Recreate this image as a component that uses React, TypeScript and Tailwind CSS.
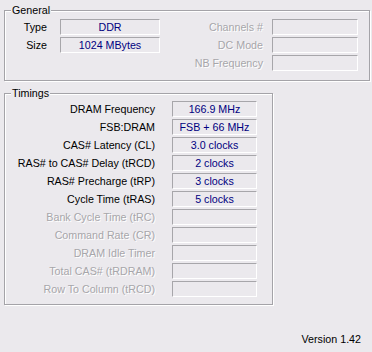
import React from "react";

type Row = { label: string; value?: string };

const general: Row[] = [
  { label: "Type", value: "DDR" },
  { label: "Size", value: "1024 MBytes" },
];

const generalRight: Row[] = [
  { label: "Channels #" },
  { label: "DC Mode" },
  { label: "NB Frequency" },
];

const timings: Row[] = [
  { label: "DRAM Frequency", value: "166.9 MHz" },
  { label: "FSB:DRAM", value: "FSB + 66 MHz" },
  { label: "CAS# Latency (CL)", value: "3.0 clocks" },
  { label: "RAS# to CAS# Delay (tRCD)", value: "2 clocks" },
  { label: "RAS# Precharge (tRP)", value: "3 clocks" },
  { label: "Cycle Time (tRAS)", value: "5 clocks" },
  { label: "Bank Cycle Time (tRC)" },
  { label: "Command Rate (CR)" },
  { label: "DRAM Idle Timer" },
  { label: "Total CAS# (tRDRAM)" },
  { label: "Row To Column (tRCD)" },
];

const disabled = "text-[#a7a6aa] [text-shadow:1px_1px_0_#ffffff]";

function Box({ value, className }: { value?: string; className: string }) {
  return (
    <div
      className={`h-[16px] border border-t-[#a7a6aa] border-l-[#a7a6aa] border-b-white border-r-white text-center leading-[15px] text-[#000080] ${className}`}
    >
      {value}
    </div>
  );
}

function Group({ title, className, children }: { title: string; className: string; children: React.ReactNode }) {
  return (
    <div
      className={`relative ml-[4px] border border-[#a4a3a8] shadow-[inset_1px_1px_0_#ffffff,1px_1px_0_#ffffff] ${className}`}
    >
      <span className="absolute -top-[8px] left-[6px] bg-[#ebe9ed] px-[1px] leading-[14px]">{title}</span>
      {children}
    </div>
  );
}

export default function App() {
  return (
    <div
      className="w-[372px] h-[352px] overflow-hidden bg-[#ebe9ed] text-[10.7px] text-black"
      style={{ fontFamily: '"Liberation Sans", Arial, sans-serif' }}
    >
      <div className="h-[10px]" />

      {/* General */}
      <Group title="General" className="w-[366px] h-[71px] pt-[8px] flex">
        <div className="flex flex-col gap-[2px]">
          {general.map((r) => (
            <div key={r.label} className="flex items-center h-[16px]">
              <div className="w-[42px] text-right leading-[17px]">{r.label}</div>
              <Box value={r.value} className="ml-[13px] w-[100px]" />
            </div>
          ))}
        </div>
        <div className="ml-[11px] flex flex-col gap-[2px]">
          {generalRight.map((r) => (
            <div key={r.label} className="flex items-center h-[16px]">
              <div className={`w-[92px] text-right leading-[17px] ${disabled}`}>{r.label}</div>
              <Box className="ml-[9px] w-[86px]" />
            </div>
          ))}
        </div>
      </Group>

      {/* Timings */}
      <Group title="Timings" className="mt-[12px] w-[269px] h-[212px] pt-[7px]">
        <div className="flex flex-col gap-[2px]">
          {timings.map((r) => (
            <div key={r.label} className="flex items-center h-[16px]">
              <div className={`w-[150px] text-right leading-[17px] ${r.value ? "" : disabled}`}>{r.label}</div>
              <Box value={r.value} className="ml-[17px] w-[85px]" />
            </div>
          ))}
        </div>
      </Group>

      <div className="mt-[26px] flex justify-end pr-[11px] leading-[16px]">Version 1.42</div>
    </div>
  );
}
